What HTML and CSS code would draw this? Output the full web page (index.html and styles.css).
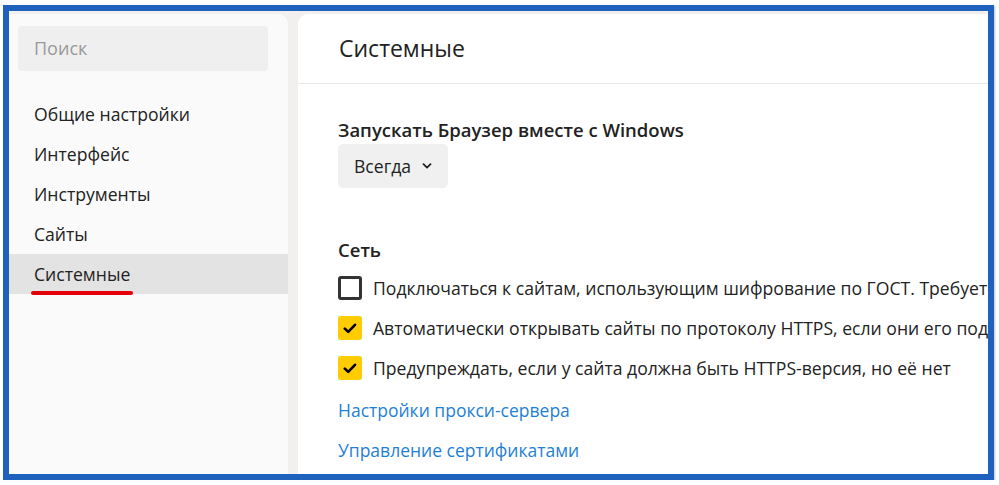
FILE: index.html
```html
<!DOCTYPE html>
<html lang="ru">
<head>
  <meta charset="UTF-8">
  <title>Настройки — Системные</title>
  <link rel="stylesheet" href="styles.css">
</head>
<body>
  <div class="frame">
    <aside class="sidebar">
      <div class="search">Поиск</div>
      <nav class="nav">
        <div class="nav-item">Общие настройки</div>
        <div class="nav-item">Интерфейс</div>
        <div class="nav-item">Инструменты</div>
        <div class="nav-item">Сайты</div>
        <div class="nav-item active"><span class="mark">Системные</span></div>
      </nav>
    </aside>

    <main class="panel">
      <div class="panel-head">Системные</div>
      <div class="panel-body">
        <h3 class="title first">Запускать Браузер вместе с Windows</h3>
        <div class="select">
          Всегда
          <svg width="10" height="6" viewBox="0 0 10 6"><path d="M1.5 1.2 L5 4.6 L8.5 1.2" fill="none" stroke="#222" stroke-width="1.8" stroke-linecap="round" stroke-linejoin="round"/></svg>
        </div>

        <h3 class="title net">Сеть</h3>
        <div class="option">
          <span class="box"></span>
          Подключаться к сайтам, использующим шифрование по ГОСТ. Требуется КриптоПро CSP
        </div>
        <div class="option">
          <span class="box checked"><svg width="14" height="11" viewBox="0 0 14 11"><path d="M1.8 5.6 L5.2 8.8 L12 1.8" fill="none" stroke="#000" stroke-width="2.6" stroke-linecap="round" stroke-linejoin="round"/></svg></span>
          Автоматически открывать сайты по протоколу HTTPS, если они его поддерживают
        </div>
        <div class="option">
          <span class="box checked"><svg width="14" height="11" viewBox="0 0 14 11"><path d="M1.8 5.6 L5.2 8.8 L12 1.8" fill="none" stroke="#000" stroke-width="2.6" stroke-linecap="round" stroke-linejoin="round"/></svg></span>
          Предупреждать, если у сайта должна быть HTTPS-версия, но её нет
        </div>
        <a class="link first-link" href="#">Настройки прокси-сервера</a>
        <a class="link" href="#">Управление сертификатами</a>
      </div>
    </main>
  </div>
</body>
</html>
```

FILE: styles.css
```css
body { margin: 0; background: #fff; font-family: 'Open Sans', 'Noto Sans', sans-serif; color: #222; }

.frame { width: 979px; height: 460px; margin: 5px 0 0 3px; border: 6px solid #1f62be; background: #f1f0ef; display: flex; gap: 10px; padding-top: 3px; overflow: hidden; box-shadow: 1px 1px 2px rgba(0,0,0,.25); }

.sidebar { width: 279px; flex: none; background: #fafafa; border-top-right-radius: 10px; padding-top: 12px; box-sizing: border-box; }
.search { margin: 0 20px 0 9px; height: 45px; border-radius: 4px; background: #efefef; color: #9a9a9a; font-size: 18px; line-height: 45px; padding-left: 16px; }
.nav { margin-top: 23px; }
.nav-item { height: 40px; line-height: 40px; padding-left: 25px; font-size: 17.6px; color: #222; }
.nav-item.active { background: #e3e3e3; }
.mark { position: relative; }
.mark::after { content: ""; position: absolute; left: -3px; right: -3px; bottom: -9px; height: 4px; border-radius: 2px; background: #e3000b; }

.panel { flex: 1; min-width: 0; background: #fff; border-top-left-radius: 10px; overflow: hidden; white-space: nowrap; }
.panel-head { height: 69px; line-height: 69px; padding-left: 41px; font-size: 23px; color: #222; border-bottom: 1px solid #e8e8e8; }
.panel-body { padding-left: 40px; }

.title { margin: 0; font-size: 18.5px; font-weight: 600; line-height: 24px; color: #222; }
.title.first { margin-top: 34px; }
.title.net { margin-top: 50px; margin-bottom: 6px; }

.select { display: inline-flex; align-items: center; gap: 11px; margin-top: 2px; height: 44px; padding: 0 16px; border-radius: 5px; background: #f0f0f0; font-size: 17.6px; }

.option { display: flex; align-items: center; gap: 11px; height: 40px; font-size: 17.6px; color: #222; }
.box { width: 24px; height: 24px; flex: none; box-sizing: border-box; border: 3px solid #333; border-radius: 3px; display: flex; align-items: center; justify-content: center; }
.box.checked { border: none; background: #ffcc00; }

.link { display: block; height: 40px; line-height: 40px; font-size: 17.5px; color: #1f80d6; text-decoration: none; }
.link.first-link { margin-top: 2px; }
```
